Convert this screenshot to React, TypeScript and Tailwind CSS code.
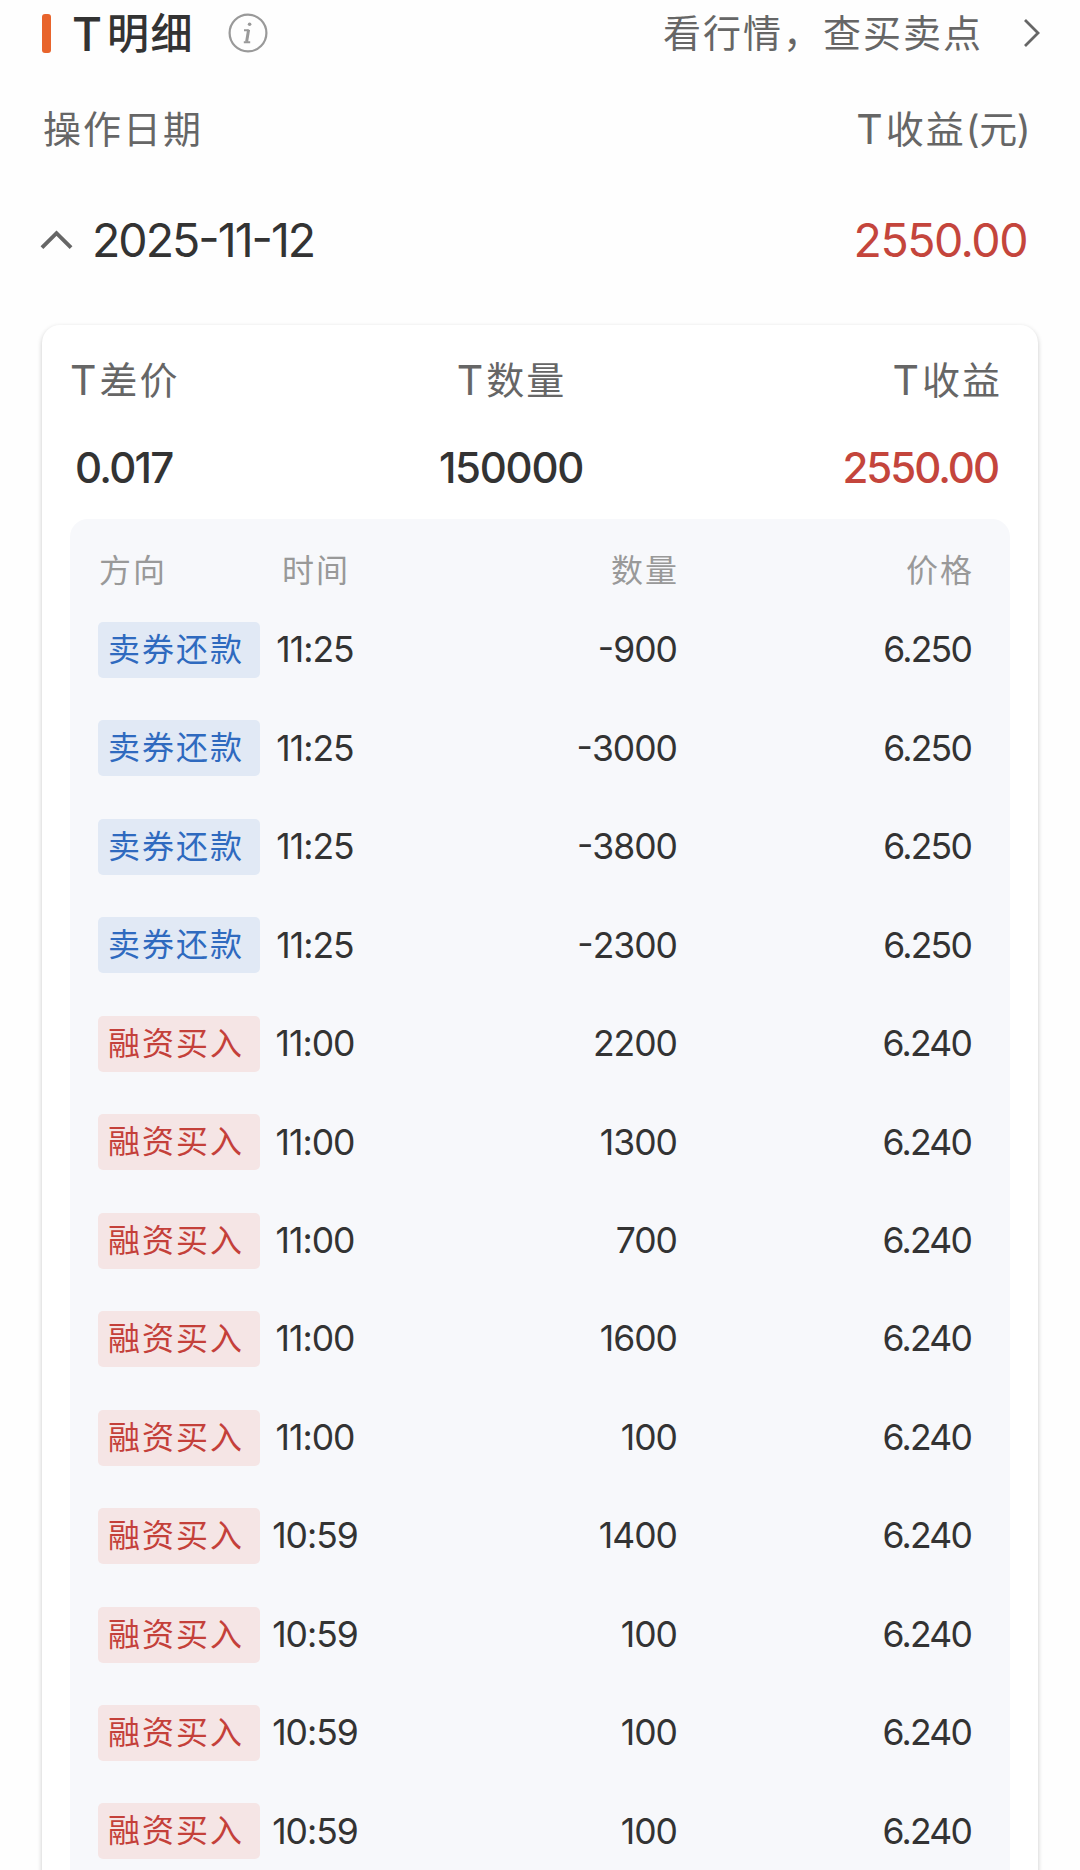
import React from 'react';

type Trade = {
  side: 'sell' | 'buy';
  time: string;
  amount: string;
  price: string;
};

const trades: Trade[] = [
  { side: 'sell', time: '11:25', amount: '-900', price: '6.250' },
  { side: 'sell', time: '11:25', amount: '-3000', price: '6.250' },
  { side: 'sell', time: '11:25', amount: '-3800', price: '6.250' },
  { side: 'sell', time: '11:25', amount: '-2300', price: '6.250' },
  { side: 'buy', time: '11:00', amount: '2200', price: '6.240' },
  { side: 'buy', time: '11:00', amount: '1300', price: '6.240' },
  { side: 'buy', time: '11:00', amount: '700', price: '6.240' },
  { side: 'buy', time: '11:00', amount: '1600', price: '6.240' },
  { side: 'buy', time: '11:00', amount: '100', price: '6.240' },
  { side: 'buy', time: '10:59', amount: '1400', price: '6.240' },
  { side: 'buy', time: '10:59', amount: '100', price: '6.240' },
  { side: 'buy', time: '10:59', amount: '100', price: '6.240' },
  { side: 'buy', time: '10:59', amount: '100', price: '6.240' },
];

// Lifts hyphens to the middle of the digits
function Digits({ text }: { text: string }) {
  return (
    <>
      {text.split(/(-)/).map((part, i) =>
        part === '-' ? (
          <span key={i} className="inline-block -translate-y-[0.06em]">
            -
          </span>
        ) : (
          part
        ),
      )}
    </>
  );
}

function InfoIcon() {
  return (
    <svg className="ml-[34px] h-10 w-10" viewBox="0 0 40 40" fill="none" stroke="#999" strokeWidth="2.2">
      <circle cx="20" cy="20" r="18.4" />
      <circle cx="21.6" cy="11.2" r="1.8" fill="#999" stroke="none" />
      <path d="M16 17.2h4.8M15.8 29.2h6.4" strokeWidth="1.9" />
      <path d="M20.6 16.8l-2 12" strokeWidth="3" />
    </svg>
  );
}

function SectionHeader() {
  return (
    <header className="flex h-[66px] items-center pl-[42px] pr-[39px]">
      <div className="h-[39px] w-[9px] rounded-[3px] bg-[#e8642c]" />
      <h1 className="ml-[21px] mt-px flex items-center text-[42px] font-medium leading-none tracking-[1.5px] text-[#333]">
        <span className="mr-[5px] text-[46px] font-medium tracking-normal">T</span>
        明细
      </h1>
      <InfoIcon />
      <div className="ml-auto flex items-center text-[#666]">
        <span className="text-[38px] leading-none tracking-[2px]">看行情，查买卖点</span>
        <svg className="ml-[40px] h-[30px] w-[18px]" viewBox="0 0 18 30" fill="none" stroke="#666" strokeWidth="2.8">
          <path d="M2 2l13 13L2 28" />
        </svg>
      </div>
    </header>
  );
}

function TLabel({ children }: { children: React.ReactNode }) {
  return (
    <span className="flex items-center text-[38px] leading-none tracking-[2px] text-[#666]">
      <span className="mr-[4px] text-[41px] tracking-[-1px]">T</span>
      {children}
    </span>
  );
}

function DateRow() {
  return (
    <div className="flex h-[152px] items-center pl-[40px] pr-[53px] text-[46.5px] leading-none text-[#333]">
      <svg className="mb-[5px] h-[22px] w-[33px]" viewBox="0 0 34 22" fill="none" stroke="#666" strokeWidth="4">
        <path d="M2 20L17 5l15 15" />
      </svg>
      <span className="-mt-px ml-[19px] tracking-[-2px]">
        <Digits text="2025-11-12" />
      </span>
      <span className="-mt-px ml-auto tracking-[-1.5px] text-[#c4453c]">2550.00</span>
    </div>
  );
}

function TradeRow({ trade }: { trade: Trade }) {
  const sell = trade.side === 'sell';
  return (
    <div className="flex h-[98.46px] items-start pl-[28px] pr-[38px]">
      <div
        className={`flex h-14 w-[162px] items-center rounded-[5px] pl-[10px] text-[32px] leading-none tracking-[2px] ${
          sell ? 'bg-[#e1e9f5] text-[#2f6abf]' : 'bg-[#f5e5e5] text-[#c4403a]'
        }`}
      >
        {sell ? '卖券还款' : '融资买入'}
      </div>
      <div className="flex h-14 flex-1 items-center text-[35.5px] leading-none tracking-[-1px] text-[#333]">
        <span className="w-[110px] text-center">{trade.time}</span>
        <span className="w-[307px] text-right">
          <Digits text={trade.amount} />
        </span>
        <span className="flex-1 pr-px text-right tracking-[-1.8px]">{trade.price}</span>
      </div>
    </div>
  );
}

export default function App() {
  return (
    <div className="h-[1870px] w-[1080px] overflow-hidden bg-[#fefefe] font-['Inter','Noto_Sans_CJK_SC',sans-serif]">
      <SectionHeader />
      <div className="flex h-[126px] items-center justify-between pl-[43px] pr-[50px]">
        <span className="text-[38px] leading-none tracking-[2px] text-[#666]">操作日期</span>
        <TLabel>
          收益<span className="tracking-[-0.5px]">(元)</span>
        </TLabel>
      </div>
      <div className="-mt-[27px]">
        <DateRow />
      </div>

      <section className="mx-[42px] mt-[8px] h-[1600px] rounded-[18px] bg-white px-[28px] shadow-[0_2px_5px_rgba(0,0,0,0.22)]">
        <div className="flex h-[110px] items-center pr-[8px]">
          <div className="w-[340px]">
            <TLabel>差价</TLabel>
          </div>
          <div className="flex w-[203px] justify-center">
            <TLabel>数量</TLabel>
          </div>
          <div className="ml-auto">
            <TLabel>收益</TLabel>
          </div>
        </div>
        <div className="flex h-[84px] items-start pl-[5px] pr-[12px] pt-[12px] text-[42px] font-medium leading-none tracking-[-1.7px] text-[#333]">
          <span className="w-[334px]">0.017</span>
          <span className="w-[204px] text-center tracking-[-1.3px]">150000</span>
          <span className="ml-auto tracking-[-2px] text-[#c4453c]">2550.00</span>
        </div>

        <div className="h-[1400px] rounded-[18px] bg-[#f7f8fb]">
          <div className="flex h-[103px] items-center pl-[29px] pr-[36px] pt-px text-[32px] leading-none tracking-[2px] text-[#999]">
            <span className="w-[183px]">方向</span>
            <span className="w-[100px]">时间</span>
            <span className="w-[297px] text-right">数量</span>
            <span className="flex-1 text-right">价格</span>
          </div>
          {trades.map((trade, i) => (
            <TradeRow key={i} trade={trade} />
          ))}
        </div>
      </section>
    </div>
  );
}
